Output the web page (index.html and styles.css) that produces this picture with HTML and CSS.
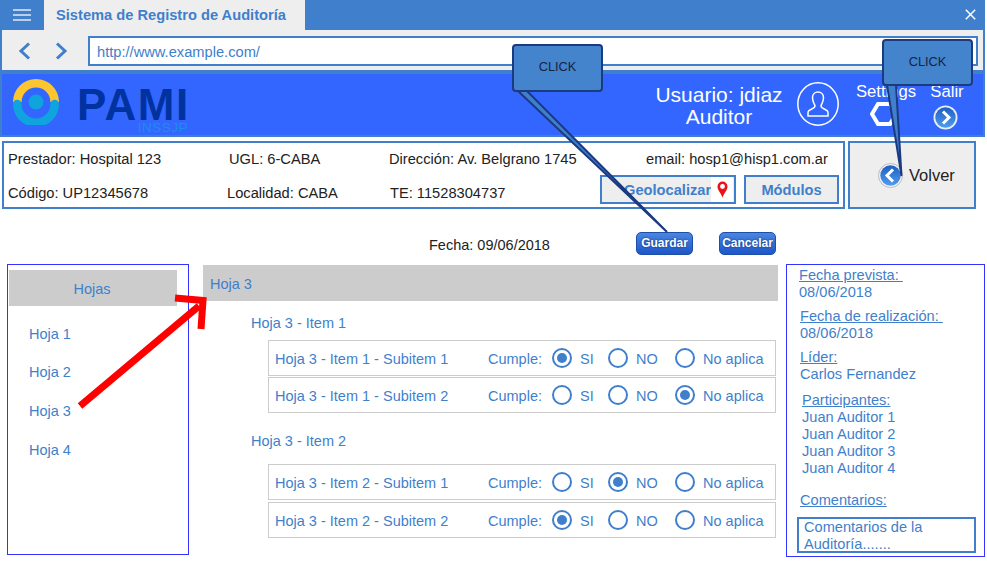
FILE: index.html
```html
<!DOCTYPE html>
<html lang="es">
<head>
<meta charset="utf-8">
<title>Sistema de Registro de Auditoría</title>
<link rel="stylesheet" href="styles.css">
</head>
<body>
<div class="page">
  <div class="titlebar">
    <div class="menu-btn"><svg width="18" height="12" viewBox="0 0 18 12"><path d="M0 1h18M0 6h18M0 11h18" stroke="#b9d0ec" stroke-width="2"/></svg></div>
    <div class="tab">Sistema de Registro de Auditoría</div>
    <div class="close"><svg width="11" height="11" viewBox="0 0 11 11"><path d="M.8.8l9.4 9.4M10.2.8L.8 10.2" stroke="#fff" stroke-width="1.5"/></svg></div>
  </div>
  <div class="addressbar">
    <svg class="nav" width="14" height="20" viewBox="0 0 14 20"><path d="M11 2.500L3 10l8 7.500" fill="none" stroke="#3f7fcc" stroke-width="3"/></svg>
    <svg class="nav" width="14" height="20" viewBox="0 0 14 20"><path d="M3 2.500l8 7.500-8 7.500" fill="none" stroke="#3f7fcc" stroke-width="3"/></svg>
    <div class="url">http://www.example.com/</div>
  </div>
  <header class="header">
    <div class="logo">
      <svg width="46" height="46" viewBox="0 0 46 46">
        <path d="M4.300 23A18.700 18.700 0 0 1 41.700 23" fill="none" stroke="#fdc52f" stroke-width="8.600"/>
        <path d="M4.300 25A18.700 18.700 0 0 0 41.700 25" fill="none" stroke="#0fa4dd" stroke-width="8.600" stroke-linecap="round"/>
        <circle cx="23" cy="23" r="7.500" fill="#0fa4dd"/>
      </svg>
      <div class="brand"><span class="pami">PAMI</span><span class="inssjp">INSSJP</span></div>
    </div>
    <div class="userblock">
      <div class="username">Usuario: jdiaz<br>Auditor</div>
      <svg class="avatar" width="42" height="44" viewBox="0 0 42 44"><ellipse cx="21" cy="22" rx="20.200" ry="21.200" fill="none" stroke="#fff" stroke-width="1.500"/><path d="M11 34v-4c0-2.500 7-3 7-6 0-1.500-2.500-3.500-2.500-8.500 0-3.500 2.500-5.500 5.500-5.500s5.500 2 5.500 5.500c0 5-2.500 7-2.500 8.500 0 3 7 3.500 7 6v4z" fill="none" stroke="#fff" stroke-width="1.500"/></svg>
      <div class="hdr-action settings">
        <span>Settings</span>
        <svg width="28" height="24" viewBox="0 0 28 24"><path d="M8 2h12l6 10-6 10H8L2 12z" fill="none" stroke="#fff" stroke-width="4"/></svg>
      </div>
      <div class="hdr-action salir">
        <span>Salir</span>
        <svg width="25" height="25" viewBox="0 0 25 25"><defs><linearGradient id="gloss" x1="0" y1="0" x2="0" y2="1"><stop offset="0" stop-color="#1f5fc0"/><stop offset="1" stop-color="#4f9cf0"/></linearGradient></defs><circle cx="12.500" cy="12.500" r="12" fill="#e8eef8"/><circle cx="12.500" cy="12.500" r="10.200" fill="url(#gloss)"/><path d="M10 6.500l6 6-6 6" fill="none" stroke="#fff" stroke-width="3"/></svg>
      </div>
    </div>
  </header>
  <section class="inforow">
    <div class="infobox">
      <div class="info-line">
        <span class="cell c1">Prestador: Hospital 123</span>
        <span class="cell c2">UGL: 6-CABA</span>
        <span class="cell c3">Dirección: Av. Belgrano 1745</span>
        <span class="cell c4">email: hosp1@hisp1.com.ar</span>
      </div>
      <div class="info-line second">
        <span class="cell c1">Código: UP12345678</span>
        <span class="cell c2b">Localidad: CABA</span>
        <span class="cell c3b">TE: 11528304737</span>
        <div class="btn geo">Geolocalizar<span class="pin"><svg width="11" height="17" viewBox="0 0 11 17"><path d="M5.500 16.500C4 12 .5 9.500.5 5.500a5 5 0 0 1 10 0C10.500 9.500 7 12 5.500 16.500z" fill="#e8141c"/><circle cx="5.500" cy="5.500" r="2.400" fill="#fff"/></svg></span></div>
        <div class="btn mod">Módulos</div>
      </div>
    </div>
    <div class="volver">
      <svg width="25" height="25" viewBox="0 0 25 25"><circle cx="12.500" cy="12.500" r="12" fill="#f4f4f4" stroke="#bbb" stroke-width="1"/><circle cx="12.500" cy="12.500" r="10.200" fill="url(#gloss)"/><path d="M15 6.500l-6 6 6 6" fill="none" stroke="#fff" stroke-width="3"/></svg>
      <span>Volver</span>
    </div>
  </section>
  <div class="actions">
    <span class="fecha">Fecha: 09/06/2018</span>
    <span class="pill guardar">Guardar</span>
    <span class="pill cancelar">Cancelar</span>
  </div>
  <main class="content">
    <aside class="sheets">
      <div class="sheets-head">Hojas</div>
      <ul class="sheets-list">
        <li>Hoja 1</li>
        <li>Hoja 2</li>
        <li>Hoja 3</li>
        <li>Hoja 4</li>
      </ul>
    </aside>
    <section class="detail">
      <div class="detail-head">Hoja 3</div>
      <h3 class="item first">Hoja 3 - Item 1</h3>
      <div class="row">
        <span class="row-name">Hoja 3 - Item 1 - Subitem 1</span>
        <span class="cumple">Cumple:</span>
        <span class="radio on"></span><span class="opt si">SI</span>
        <span class="radio"></span><span class="opt no">NO</span>
        <span class="radio"></span><span class="opt">No aplica</span>
      </div>
      <div class="row">
        <span class="row-name">Hoja 3 - Item 1 - Subitem 2</span>
        <span class="cumple">Cumple:</span>
        <span class="radio"></span><span class="opt si">SI</span>
        <span class="radio"></span><span class="opt no">NO</span>
        <span class="radio on"></span><span class="opt">No aplica</span>
      </div>
      <h3 class="item second">Hoja 3 - Item 2</h3>
      <div class="row">
        <span class="row-name">Hoja 3 - Item 2 - Subitem 1</span>
        <span class="cumple">Cumple:</span>
        <span class="radio"></span><span class="opt si">SI</span>
        <span class="radio on"></span><span class="opt no">NO</span>
        <span class="radio"></span><span class="opt">No aplica</span>
      </div>
      <div class="row">
        <span class="row-name">Hoja 3 - Item 2 - Subitem 2</span>
        <span class="cumple">Cumple:</span>
        <span class="radio on"></span><span class="opt si">SI</span>
        <span class="radio"></span><span class="opt no">NO</span>
        <span class="radio"></span><span class="opt">No aplica</span>
      </div>
    </section>
    <aside class="meta">
      <div class="meta-block b1"><u>Fecha prevista:&nbsp;</u><br>08/06/2018</div>
      <div class="meta-block b2"><u>Fecha de realización:&nbsp;</u><br>08/06/2018</div>
      <div class="meta-block b3"><u>Líder:</u><br>Carlos Fernandez</div>
      <div class="meta-block b4"><u>Participantes:</u><br>Juan Auditor 1<br>Juan Auditor 2<br>Juan Auditor 3<br>Juan Auditor 4</div>
      <div class="meta-block b5"><u>Comentarios:</u></div>
      <div class="comment">Comentarios de la Auditoría.......</div>
    </aside>
  </main>
  <svg class="overlay" width="987" height="563" viewBox="0 0 987 563">
    <path d="M80 406L199 306" fill="none" stroke="#ff0000" stroke-width="7"/>
    <path d="M175 298L203 300.500L201 329" fill="none" stroke="#ff0000" stroke-width="7"/>
    <path d="M518 91L667 232L527 91" fill="#3f7fcc" stroke="#1c3a80" stroke-width="2"/>
    <path d="M887 85L901.500 176L896 85" fill="#3f7fcc" stroke="#1c3a80" stroke-width="2"/>
  </svg>
  <div class="callout c-a">CLICK</div>
  <div class="callout c-b">CLICK</div>
</div>
</body>
</html>
```
FILE: styles.css
```css
* { box-sizing: border-box; }
html, body { margin: 0; padding: 0; background: #fff; }
.page {
  position: relative;
  width: 987px;
  height: 563px;
  overflow: hidden;
  font-family: "Liberation Sans", Arial, sans-serif;
  font-size: 14.5px;
  color: #222;
}
.titlebar {
  display: flex;
  height: 30px;
  margin-right: 2px;
  background: #3f7fcc;
}
.menu-btn {
  width: 44px;
  display: flex;
  align-items: center;
  justify-content: center;
}
.tab {
  width: 261px;
  padding-left: 12px;
  background: #eee;
  color: #3f7fcc;
  font-weight: bold;
  font-size: 14.67px;
  line-height: 31px;
}
.close {
  margin-left: auto;
  width: 30px;
  padding-bottom: 2px;
  display: flex;
  align-items: center;
  justify-content: center;
}
.addressbar {
  display: flex;
  align-items: center;
  height: 40px;
  margin-right: 2px;
  padding: 2px 0 0 16px;
  border-left: 2px solid #3f7fcc;
  border-right: 2px solid #3f7fcc;
  background: #eee;
  gap: 22px;
}
.addressbar .nav { flex: none; }
.url {
  width: 890px;
  height: 30px;
  margin-left: -2px;
  padding-left: 7px;
  border: 2px solid #3f7fcc;
  background: #fff;
  color: #3f7fcc;
  line-height: 28px;
  font-size: 14.67px;
}
.header {
  display: flex;
  justify-content: space-between;
  height: 67px;
  margin-right: 2px;
  border-style: solid;
  border-color: #3f7fcc;
  border-width: 4px 2px 2px 2px;
  background: #3366ff;
}
.logo {
  display: flex;
  padding: 5px 0 0 11px;
}
.brand {
  width: 115px;
  margin: 9px 0 0 18px;
}
.pami {
  display: block;
  color: #0033a0;
  font-size: 44px;
  line-height: 34px;
  font-weight: bold;
  letter-spacing: 1.500px;
}
.inssjp {
  display: block;
  margin-top: -1px;
  padding-right: 4px;
  text-align: right;
  font-size: 13.5px;
  line-height: 14px;
  letter-spacing: .5px;
  color: #1c8ee6;
}
.userblock {
  display: flex;
  align-items: flex-start;
  color: #fff;
}
.username {
  width: 140px;
  padding-top: 10px;
  text-align: center;
  font-size: 21px;
  line-height: 22px;
}
.avatar { margin: 8px 0 0 8px; flex: none; }
.hdr-action {
  display: flex;
  flex-direction: column;
  align-items: center;
  font-size: 16.67px;
  line-height: 18px;
}
.settings { width: 64px; margin-left: 15px; padding-top: 9px; }
.settings svg { margin-top: 1px; margin-right: 4px; }
.salir { width: 36px; margin: 0 18px 0 11px; padding-top: 9px; }
.salir svg { margin-top: 4px; margin-right: 4px; }
.inforow {
  display: flex;
  gap: 3px;
  height: 68px;
  margin: 4px 11px 0 2px;
  font-size: 14.67px;
}
.infobox {
  width: 843px;
  border: 2px solid #3f7fcc;
  padding: 0 4px;
}
.info-line {
  display: flex;
  align-items: center;
  height: 32px;
}
.info-line.second {
  align-items: flex-start;
  height: 32px;
}
.second .cell { margin-top: 10px; }
.cell { white-space: nowrap; }
.c1 { width: 221px; }
.c2 { width: 160px; }
.c3 { width: 257px; }
.c2b { width: 163px; margin-left: -2px; }
.c3b { width: 210px; }
.btn {
  display: flex;
  align-items: center;
  justify-content: center;
  height: 29px;
  border: 2px solid #3f7fcc;
  background: #eee;
  color: #3f7fcc;
  font-weight: bold;
}
.geo { width: 136px; justify-content: flex-start; padding-left: 22px; }
.pin {
  display: flex;
  justify-content: center;
  align-items: center;
  width: 22px;
  height: 25px;
  background: #fff;
}
.mod { width: 95px; margin-left: 8px; }
.volver {
  width: 128px;
  display: flex;
  align-items: center;
  gap: 6px;
  padding-left: 28px;
  border: 2px solid #3f7fcc;
  background: #eee;
  font-size: 16.5px;
}
.volver svg { flex: none; margin-top: 1px; }
.actions {
  display: flex;
  align-items: center;
  height: 23px;
  margin-top: 23px;
  padding-left: 429px;
}
.fecha { width: 207px; padding-top: 3px; }
.pill {
  display: block;
  height: 23px;
  border-radius: 5px;
  background: linear-gradient(#4a86e0, #1d56c8);
  border: 1px solid #1e4fa8;
  color: #fff;
  font-weight: bold;
  font-size: 12px;
  line-height: 21px;
  text-align: center;
  text-shadow: 0 0 2px #0a2a70;
}
.guardar { width: 57px; }
.cancelar { width: 57px; margin-left: 26px; }
.content {
  display: flex;
  align-items: flex-start;
  margin-top: 9px;
  padding-left: 7px;
  color: #3f7fcc;
}
.sheets {
  width: 182px;
  height: 291px;
  margin-right: 14px;
  border: 1px solid #3333ff;
  padding: 5px 0 0 1px;
}
.sheets-head {
  width: 168px;
  height: 36px;
  padding: 1px 2px 0 0;
  background: #ccc;
  text-align: center;
  line-height: 36px;
}
.sheets-list {
  list-style: none;
  margin: 8px 0 0;
  padding: 0 0 0 20px;
}
.sheets-list li { height: 39px; line-height: 39px; }
.sheets-list li:first-child { line-height: 41px; }
.detail { width: 575px; margin-top: 1px; margin-right: 8px; }
.detail-head {
  height: 36px;
  padding: 1px 0 0 7px;
  background: #ccc;
  line-height: 36px;
}
.item {
  margin: 0 0 0 48px;
  font: inherit;
  line-height: 17px;
}
.item.first { margin-top: 14px; margin-bottom: 8px; }
.item.second { margin-top: 20px; margin-bottom: 14px; }
.row {
  display: flex;
  align-items: center;
  height: 36px;
  width: 508px;
  margin: 0 0 1px 65px;
  padding-left: 6px;
  border: 1px solid #ccc;
}
.item.second + .row { margin-bottom: 2px; }
.row-name { width: 213px; white-space: nowrap; padding-top: 2px; }
.cumple { width: 64px; white-space: nowrap; padding-top: 1px; }
.radio {
  flex: none;
  position: relative;
  width: 20px;
  height: 20px;
  margin-right: 8px;
  border: 2px solid #3f7fcc;
  border-radius: 50%;
  background: #fff;
}
.radio.on::after {
  content: "";
  position: absolute;
  left: 3px;
  top: 3px;
  width: 10px;
  height: 10px;
  border-radius: 50%;
  background: #3f7fcc;
}
.opt { white-space: nowrap; padding-top: 2px; }
.si { width: 28px; }
.no { width: 39px; }
.meta {
  width: 199px;
  height: 293px;
  border: 1px solid #3333ff;
  padding: 2px 0 0 12px;
  line-height: 17px;
  font-size: 14.6px;
}
.meta-block { white-space: nowrap; }
.b2, .b3 { margin: 7px 0 0 1px; }
.b4 { margin: 9px 0 0 3px; }
.b5 { margin: 15px 0 0 1px; }
.comment {
  width: 179px;
  height: 36px;
  margin: 8px 0 0 -2px;
  padding: 0 5px;
  border: 2px solid #3f7fcc;
  line-height: 17px;
}
.overlay {
  position: absolute;
  left: 0;
  top: 0;
}
.callout {
  position: absolute;
  width: 91px;
  border: 2px solid #1c3a80;
  border-radius: 4px;
  background: #4484cc;
  color: #16233f;
  font-size: 12.8px;
  text-align: center;
}
.c-a { left: 512px; top: 44px; height: 48px; line-height: 42px; }
.c-b { left: 882px; top: 39px; height: 47px; line-height: 42px; }
```
